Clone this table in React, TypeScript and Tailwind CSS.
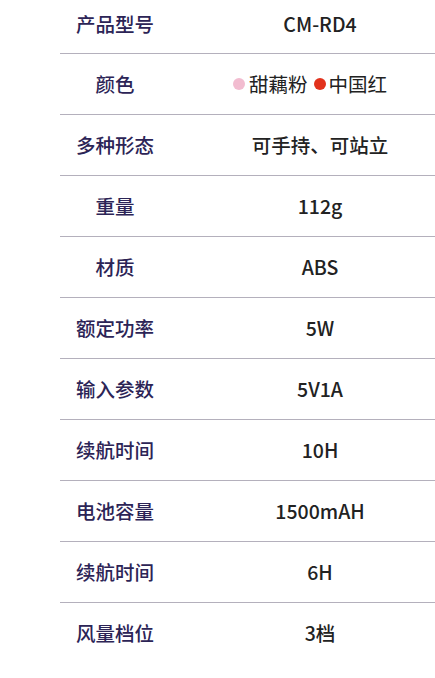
const rows: { label: string; value: string }[] = [
  { label: "产品型号", value: "CM-RD4" },
  { label: "颜色", value: "" },
  { label: "多种形态", value: "可手持、可站立" },
  { label: "重量", value: "112g" },
  { label: "材质", value: "ABS" },
  { label: "额定功率", value: "5W" },
  { label: "输入参数", value: "5V1A" },
  { label: "续航时间", value: "10H" },
  { label: "电池容量", value: "1500mAH" },
  { label: "续航时间", value: "6H" },
  { label: "风量档位", value: "3档" },
];

function ColorValue() {
  return (
    <div className="flex items-center justify-center pr-[20px] font-normal">
      <span className="mr-[4px] inline-block h-[12px] w-[12px] rounded-full bg-[#f2bcd0]" />
      <span>甜藕粉</span>
      <span className="ml-[6px] mr-[3px] inline-block h-[12px] w-[12px] rounded-full bg-[#e2321c]" />
      <span>中国红</span>
    </div>
  );
}

export default function App() {
  return (
    <div
      className="h-[678px] w-[435px] overflow-hidden bg-white"
      style={{ fontFamily: '"Noto Sans CJK SC", "Noto Sans", sans-serif' }}
    >
      <div className="ml-[60px]">
        {rows.map((row, idx) => (
          <div
            key={idx}
            className={`flex items-center text-[19.5px] font-medium ${idx === 0 ? "h-[53px] pb-[5px]" : "h-[61px] border-t border-[#b4b0bc]"}`}
          >
            <div className="w-[110px] shrink-0 text-center text-[#2c2456]">
              {row.label}
            </div>
            <div className="w-[300px] shrink-0 text-center text-[#222222]">
              {row.label === "颜色" ? <ColorValue /> : row.value}
            </div>
          </div>
        ))}
      </div>
    </div>
  );
}
